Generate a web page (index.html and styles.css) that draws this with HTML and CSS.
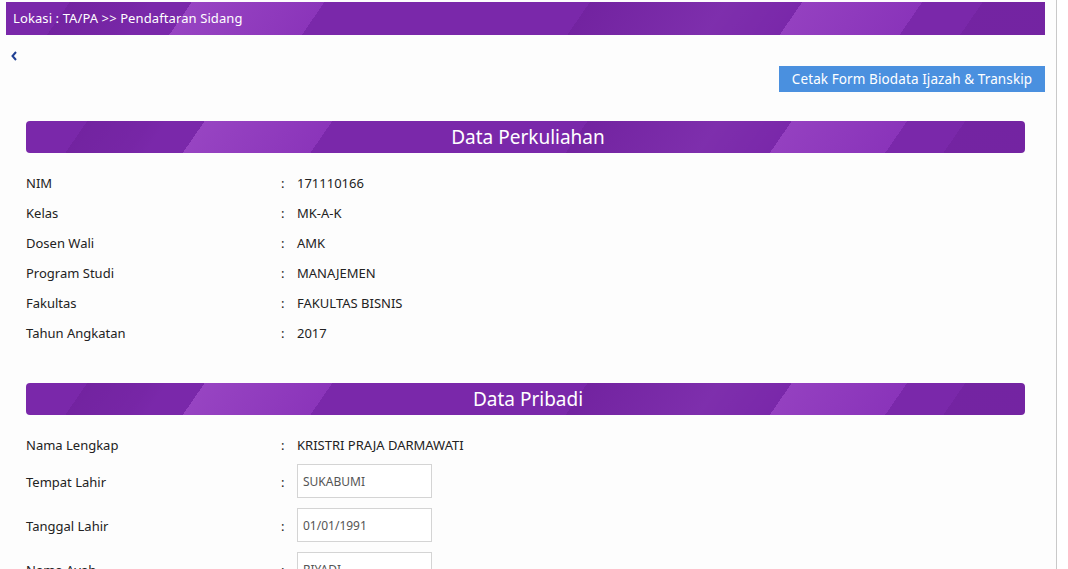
FILE: index.html
```html
<!DOCTYPE html>
<html>
<head>
<meta charset="utf-8">
<link rel="stylesheet" href="styles.css">
</head>
<body>
<div class="page">
  <div class="topbar">Lokasi : TA/PA &gt;&gt; Pendaftaran Sidang</div>
  <div class="back">
    <svg width="8" height="10" viewBox="0 0 8 10"><path d="M6 1 L2.5 5 L6 9" fill="none" stroke="#1f3f94" stroke-width="2"/></svg>
  </div>
  <div class="actions"><button class="btn">Cetak Form Biodata Ijazah &amp; Transkip</button></div>
  <div class="content">
    <div class="section-head">Data Perkuliahan</div>
    <div class="rows first">
      <div class="row"><span class="lbl">NIM</span><span class="colon">:</span><span class="val">171110166</span></div>
      <div class="row"><span class="lbl">Kelas</span><span class="colon">:</span><span class="val">MK-A-K</span></div>
      <div class="row"><span class="lbl">Dosen Wali</span><span class="colon">:</span><span class="val">AMK</span></div>
      <div class="row"><span class="lbl">Program Studi</span><span class="colon">:</span><span class="val">MANAJEMEN</span></div>
      <div class="row"><span class="lbl">Fakultas</span><span class="colon">:</span><span class="val">FAKULTAS BISNIS</span></div>
      <div class="row"><span class="lbl">Tahun Angkatan</span><span class="colon">:</span><span class="val">2017</span></div>
    </div>
    <div class="section-head second">Data Pribadi</div>
    <div class="rows">
      <div class="row"><span class="lbl">Nama Lengkap</span><span class="colon">:</span><span class="val">KRISTRI PRAJA DARMAWATI</span></div>
      <div class="row input-row"><span class="lbl">Tempat Lahir</span><span class="colon">:</span><input class="field" type="text" value="SUKABUMI"></div>
      <div class="row input-row"><span class="lbl">Tanggal Lahir</span><span class="colon">:</span><input class="field" type="text" value="01/01/1991"></div>
      <div class="row input-row"><span class="lbl">Nama Ayah</span><span class="colon">:</span><input class="field" type="text" value="RIYADI"></div>
    </div>
  </div>
</div>
</body>
</html>
```

FILE: styles.css
```css
html, body {
  margin: 0;
  padding: 0;
  background: #ffffff;
  overflow: hidden;
}
body {
  font-family: "Noto Sans", "Open Sans", sans-serif;
  color: #222;
}
.page {
  width: 1056px;
  height: 569px;
  background: #fdfdfd;
  border-right: 1px solid #c9c9c9;
  overflow: hidden;
}
.topbar, .section-head {
  background-color: #7a28aa;
  background-image:
    linear-gradient(124.5deg,
      transparent 0%,
      transparent 6%,
      rgba(60,0,90,0.12) 6%,
      rgba(60,0,90,0.05) 12%,
      transparent 14%,
      transparent 17.5%,
      #9744c2 17.5%,
      #8b35ba 30%,
      transparent 30%,
      transparent 55%,
      rgba(60,0,90,0.12) 55%,
      rgba(255,255,255,0.03) 68%,
      transparent 75%,
      #9440c0 75%,
      #8a34ba 86.3%,
      transparent 86.3%,
      transparent 92%,
      rgba(60,0,90,0.1) 92%,
      rgba(60,0,90,0.1) 100%);
  color: #fff;
}
.topbar {
  margin: 2px 11px 0 6px;
  height: 33px;
  line-height: 33px;
  padding-left: 7px;
  font-size: 13px;
  letter-spacing: 0.1px;
}
.back {
  height: 10px;
  padding: 16px 0 0 10px;
  line-height: 0;
}
.actions {
  display: flex;
  justify-content: flex-end;
  padding: 5px 11px 0 0;
}
.btn {
  width: 266px;
  height: 26px;
  border: none;
  background: #4a90df;
  color: #fff;
  font-family: "Noto Sans", "Open Sans", sans-serif;
  font-size: 13.5px;
  padding: 0;
  letter-spacing: 0.1px;
}
.content {
  padding: 0 31px 0 26px;
}
.section-head {
  margin-top: 29px;
  height: 32px;
  line-height: 33px;
  border-radius: 4px;
  text-align: center;
  font-size: 19px;
  padding-left: 5px;
}
.section-head.second {
  margin-top: 35px;
}
.rows {
  padding-top: 15px;
}
.row {
  display: flex;
  align-items: center;
  height: 30px;
  font-size: 13px;
}
.lbl {
  width: 255px;
}
.colon {
  width: 16px;
}
.val {
  color: #222;
}
.input-row {
  height: 34px;
  padding: 4px 0 6px;
}
.input-row .lbl, .input-row .colon {
  padding-top: 1px;
}
.field {
  box-sizing: border-box;
  width: 135px;
  height: 34px;
  border: 1px solid #d4d4d4;
  background: #fff;
  padding: 1px 0 0 5px;
  font-family: "Noto Sans", "Open Sans", sans-serif;
  font-size: 12px;
  color: #555;
  outline: none;
}
```
